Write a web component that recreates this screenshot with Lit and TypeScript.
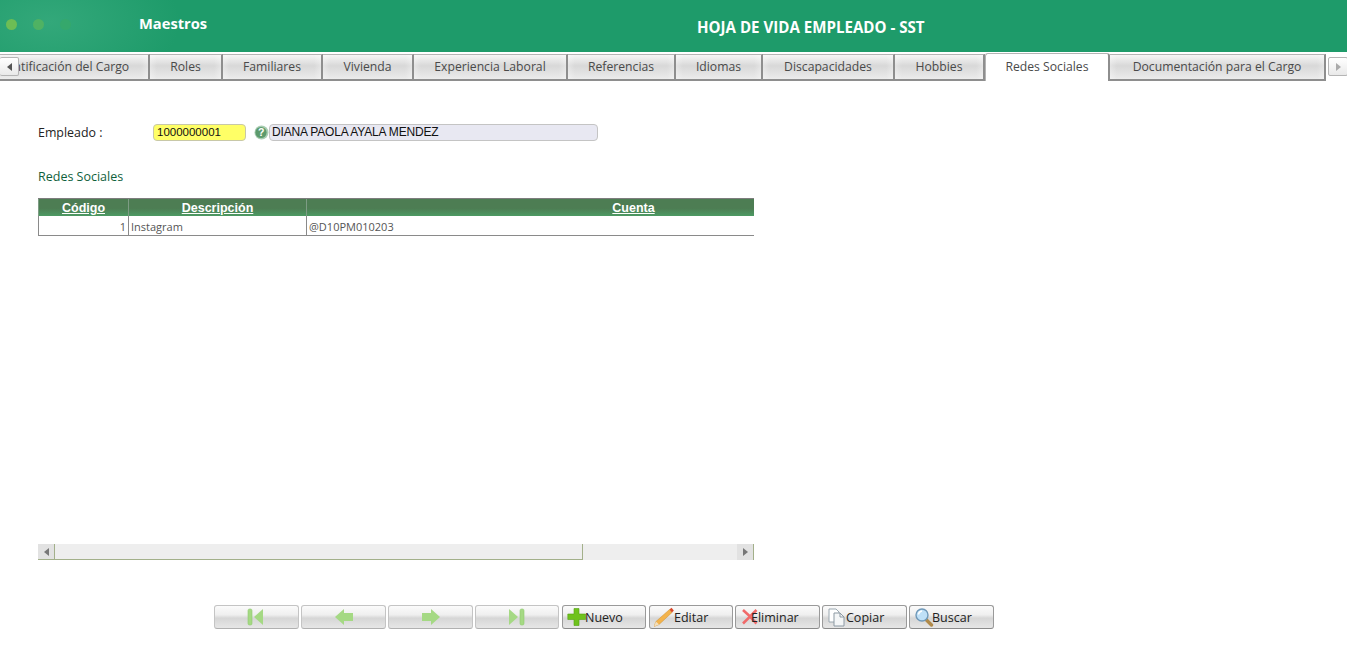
import { LitElement, html, css, svg } from "lit";
import { customElement } from "lit/decorators.js";

const TABS: [string, number, boolean?][] = [
  ["Identificación del Cargo", 173],
  ["Roles", 73],
  ["Familiares", 100],
  ["Vivienda", 91],
  ["Experiencia Laboral", 154],
  ["Referencias", 108],
  ["Idiomas", 87],
  ["Discapacidades", 132],
  ["Hobbies", 90],
  ["Redes Sociales", 125, true],
  ["Documentación para el Cargo", 216],
];

const dim = "#a5d984";
const dimD = "#8fcb70";
const first = svg`<rect x="1" y="1" width="4" height="16" rx="1.5" fill="${dim}" stroke="${dimD}" stroke-width=".6"/><path d="M7 9 L16 1 V17 Z" fill="${dim}"/>`;
const prev = svg`<path d="M1 9 L10 1 V5 H19 V13 H10 V17 Z" fill="${dim}"/>`;
const next = svg`<path d="M19 9 L10 1 V5 H1 V13 H10 V17 Z" fill="${dim}"/>`;
const last = svg`<rect x="13" y="1" width="4" height="16" rx="1.5" fill="${dim}" stroke="${dimD}" stroke-width=".6"/><path d="M11 9 L2 1 V17 Z" fill="${dim}"/>`;
const plus = svg`<path d="M7 1.5 H12 V7 H18.5 V12.5 H12 V18.5 H7 V12.5 H.8 V7 H7 Z" fill="#6fc21d" stroke="#55a312" stroke-width=".6"/>`;
const pencil = svg`<path d="M0 19.5 L2 14.5 L15.5 2.5 L18 5.5 L5 17.5 Z" fill="#f3b34c" stroke="#cf8e2c" stroke-width=".5"/><path d="M15.5 2.5 L17.5 .8 L19.8 3.6 L18 5.5 Z" fill="#d9482b"/><path d="M0 19.5 L2 14.5 L5 17.5 Z" fill="#f3dfbd"/>`;
const cross = svg`<path d="M3 3 L10 9.5 L16.5 3 M3 16.5 L10 9.5 L16.5 16.5" fill="none" stroke="#f06a6a" stroke-width="2.6"/>`;
const copy = svg`<path d="M2 2 H9 L12 5 V15 H2 Z" fill="#fff" stroke="#9aa7b0"/><path d="M7 6 H13 L17 10 V19 H7 Z" fill="#f4f6f7" stroke="#8c99a3"/><path d="M13 6 V10 H17" fill="none" stroke="#8c99a3"/>`;
const search = svg`<path d="M11.5 12 L17.5 18" stroke="#b08a4a" stroke-width="3.4" stroke-linecap="round"/><circle cx="8" cy="8" r="6" fill="#bfe0f7" stroke="#6f98b8" stroke-width="1.4"/><path d="M4.5 7.5 A4 4 0 0 1 8 4" fill="none" stroke="#fff" stroke-width="1.4"/>`;

const NAV = [
  { w: 85, icon: first },
  { w: 85, icon: prev },
  { w: 85, icon: next },
  { w: 84, icon: last },
];
const ACT: { t: string; w: number; i: unknown; ml: number; tx: number }[] = [
  { t: "Nuevo", w: 84, i: plus, ml: 1, tx: -2 },
  { t: "Editar", w: 84, i: pencil, ml: 1, tx: 0 },
  { t: "Eliminar", w: 85, i: cross, ml: 0, tx: -9 },
  { t: "Copiar", w: 85, i: copy, ml: 0, tx: -1 },
  { t: "Buscar", w: 85, i: search, ml: 0, tx: -2 },
];

@customElement("app-root")
export class AppRoot extends LitElement {
  static styles = css`
    :host { display: block; width: 1347px; height: 651px; overflow: hidden; background: #fff; font-family: "Open Sans", "Liberation Sans", sans-serif; }
    .top { height: 52px; display: flex; align-items: center; color: #fff; font-weight: 700;
      background: radial-gradient(ellipse 130px 70px at 50px 22px, #33a87a 0%, #1e9b6a 100%); background-color: #1d9a6a; }
    .dots { display: flex; gap: 16px; padding-left: 6px; width: 133px; box-sizing: border-box; margin-top: -4px; }
    .dot { width: 11px; height: 11px; border-radius: 50%; }
    .d1 { background: #6dbd55; } .d2 { background: #4fb263; } .d3 { background: #35a86c; }
    .maestros { font-size: 14.7px; width: 558px; margin-top: -6px; margin-left: 6px; }
    .title { font-size: 15.1px; margin-top: 1px; white-space: nowrap; }
    .tabs { position: relative; height: 29px; overflow: hidden; }
    .strip { display: flex; margin-left: -23px; height: 29px; padding-top: 2px; box-sizing: border-box; width: 1400px; }
    .tab { flex: none; box-sizing: border-box; height: 27px; border-top: 1px solid #b4b4b4; border-right: 2px solid #8e8e8e; border-bottom: 2px solid #8e8e8e;
      display: flex; align-items: center; justify-content: center; font-size: 12.2px; color: #4a4a4a; padding-bottom: 1px;
      background: linear-gradient(90deg, rgba(255,255,255,.3), transparent 7px, transparent calc(100% - 7px), rgba(255,255,255,.3)), linear-gradient(#f6f6f6, #d8d8d8 45%, #e4e4e4 80%, #ececec); }
    .tab.on { background: #fff; border: 1px solid #b4b4b4; border-bottom: none; border-right: 2px solid #8e8e8e; border-radius: 3px 3px 0 0; margin-top: -1px; height: 28px; padding-bottom: 3px; }
    .sb { position: absolute; top: 5px; width: 19px; height: 19px; box-sizing: border-box; border: 1px solid #b5b5b5; border-radius: 2px; background: linear-gradient(#fff,#e9e9e9); display: flex; align-items: center; justify-content: center; }
    .sb.l { left: 0; border-left: none; } .sb.r { width: 20px; left: 1328px; }
    .tri-l { width: 0; height: 0; border: 4px solid transparent; border-right: 5px solid #555; border-left: none; }
    .tri-r { width: 0; height: 0; border: 4px solid transparent; border-left: 5px solid #aaa; border-right: none; }
    .content { padding: 42px 0 0 38px; }
    .form { display: flex; align-items: center; height: 18px; font-family: "Liberation Sans", sans-serif; font-size: 12px; }
    .lab { width: 115px; font-family: "Open Sans", sans-serif; font-size: 12.4px; color: #222; }
    .code { width: 93px; height: 17px; box-sizing: border-box; border: 1px solid #c8c8a8; border-radius: 4px; background: #ffff66; color: #111; padding-left: 3px; line-height: 15px; font-size: 11.5px; }
    .help { width: 15px; height: 15px; margin-left: 8px; }
    .name { width: 329px; height: 17px; box-sizing: border-box; border: 1px solid #c4c4c4; border-radius: 4px; background: #e8e8f2; color: #111; padding-left: 2px; line-height: 15px; letter-spacing: -.18px; }
    .sec { margin-top: 27px; font-size: 12.5px; color: #0f5f3c; height: 17px; line-height: 17px; }
    .grid { margin-top: 13px; width: 716px; overflow: hidden; border-bottom: 1px solid #8a8a8a; }
    .gr { display: grid; grid-template-columns: 90px 178px 654px; width: 922px; }
    .gh { height: 18px; background: linear-gradient(#4d7d53 0%, #4d7d53 55%, #4c9a63 100%); border-top: 1px solid #7d7d7d; box-sizing: border-box; }
    .gh span { color: #fff; font: 700 12.5px/18px "Liberation Sans", sans-serif; text-decoration: underline; text-align: center; border-left: 1px solid #7d9c84; }
    .gb { height: 19px; font-size: 11px; line-height: 21px; color: #555; }
    .gb span { border-left: 1px solid #8a8a8a; padding: 0 2px; }
    .gb span:first-child { text-align: right; }
    .hs { margin-top: 308px; width: 716px; height: 16px; background: #eee; display: flex; }
    .hs-end { width: 17px; height: 16px; background: #e2e2e2; display: flex; align-items: center; justify-content: center; flex: none; box-sizing: border-box; }
    .hs-thumb { width: 528px; height: 16px; box-sizing: border-box; border-right: 1px solid #a3b08a; border-bottom: 1px solid #a3b08a; flex: none; background: #eee; }
    .hs-gap { flex: 1; }
    .e1 { border-right: 1px solid #a3b08a; border-bottom: 1px solid #a3b08a; }
    .e2 { border-right: 1px solid #a3b08a; }
    .tl { width: 0; height: 0; border: 4px solid transparent; border-right: 5px solid #777; border-left: none; }
    .tr { width: 0; height: 0; border: 4px solid transparent; border-left: 5px solid #777; border-right: none; }
    .bar { display: flex; gap: 2px; margin: 45px 0 0 176px; }
    .btn { box-sizing: border-box; height: 24px; flex: none; border: 1px solid #c4c4c4; border-bottom-color: #b0b0b0; border-radius: 3px; background: linear-gradient(#fbfbfb, #efefef 40%, #d6d6d6 55%, #e6e6e6); display: flex; align-items: center; font-size: 12.5px; color: #222; }
    .btn.nav { justify-content: center; }
    .btn.act { padding-left: 4px; border-color: #9a9a9a #9a9a9a #8a8a8a; }
    .btn svg { flex: none; }
    .btn.act span { white-space: nowrap; z-index: 1; }
  `;

  render() {
    return html`
      <div class="top">
        <div class="dots"><div class="dot d1"></div><div class="dot d2"></div><div class="dot d3"></div></div>
        <div class="maestros">Maestros</div>
        <div class="title">HOJA DE VIDA EMPLEADO - SST</div>
      </div>
      <div class="tabs">
        <div class="strip">
          ${TABS.map(([t, w, on]) => html`<div class="tab ${on ? "on" : ""}" style="width:${w}px">${t}</div>`)}
        </div>
        <div class="sb l"><div class="tri-l"></div></div>
        <div class="sb r"><div class="tri-r"></div></div>
      </div>
      <div class="content">
        <div class="form">
          <div class="lab">Empleado :</div>
          <div class="code">1000000001</div>
          <svg class="help" viewBox="0 0 15 15"><circle cx="7.5" cy="7.5" r="7" fill="#a9cdb2"/><circle cx="7" cy="7.5" r="5.6" fill="#5c9a6c"/><text x="7.3" y="11.3" font-size="10.5" font-weight="700" text-anchor="middle" fill="#fff" font-family="Liberation Sans">?</text></svg>
          <div class="name">DIANA PAOLA AYALA MENDEZ</div>
        </div>
        <div class="sec">Redes Sociales</div>
        <div class="grid">
          <div class="gr gh"><span>Código</span><span>Descripción</span><span>Cuenta</span></div>
          <div class="gr gb"><span>1</span><span>Instagram</span><span>@D10PM010203</span></div>
        </div>
        <div class="hs">
          <div class="hs-end e1"><div class="tl"></div></div>
          <div class="hs-thumb"></div>
          <div class="hs-gap"></div>
          <div class="hs-end e2"><div class="tr"></div></div>
        </div>
        <div class="bar">
          ${NAV.map((b) => html`<div class="btn nav" style="width:${b.w}px"><svg width="20" height="18" viewBox="0 0 20 18">${b.icon}</svg></div>`)}
          ${ACT.map((a) => html`<div class="btn act" style="width:${a.w}px;margin-left:${a.ml}px"><svg width="20" height="20" viewBox="0 0 20 20">${a.i}</svg><span style="margin-left:${a.tx}px">${a.t}</span></div>`)}
        </div>
      </div>
    `;
  }
}
